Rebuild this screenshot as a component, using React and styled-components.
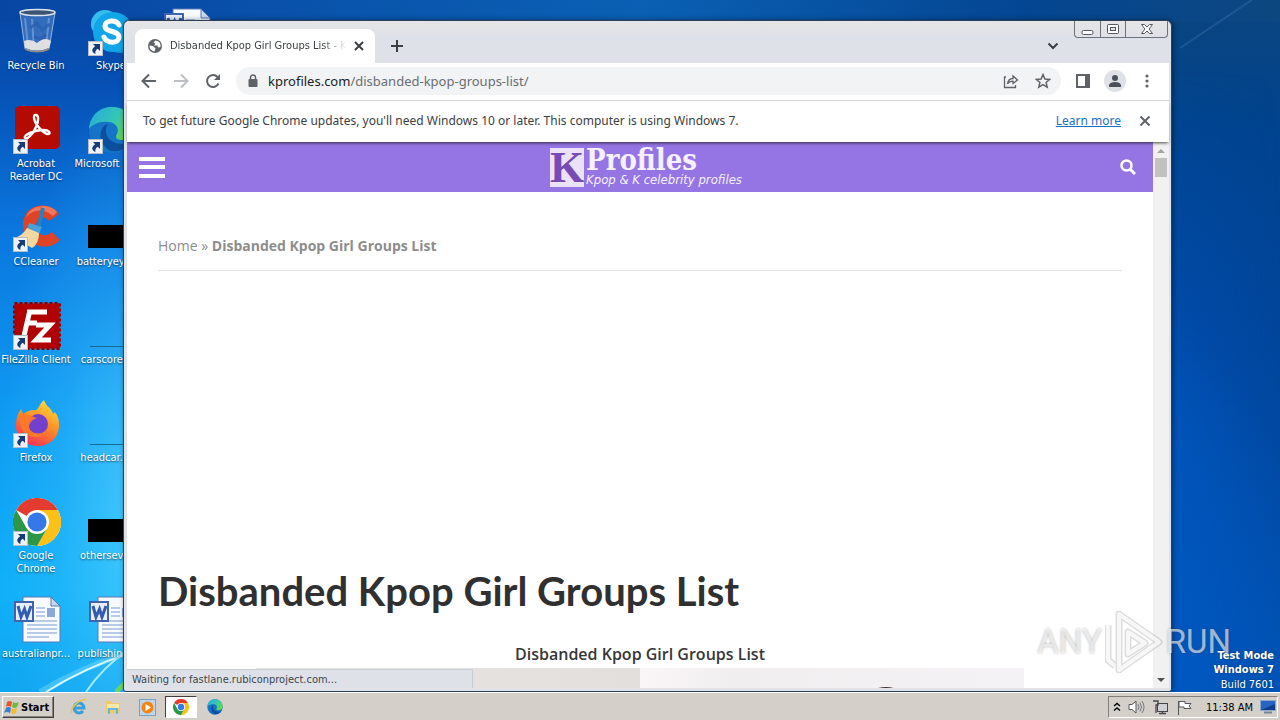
import React from "react";
import styled, { createGlobalStyle, css } from "styled-components";

const ui = `"Noto Sans", "Open Sans", sans-serif`;
const small = `"DejaVu Sans Condensed", "Noto Sans", sans-serif`;
const body = `"Open Sans", "Noto Sans", sans-serif`;

const GlobalStyle = createGlobalStyle`
  *, *::before, *::after { box-sizing: border-box; }
  html, body { margin: 0; padding: 0; }
  body { font-family: ${ui}; font-size: 11px; color: #000; overflow: hidden; }
  button { font: inherit; color: inherit; border: 0; padding: 0; margin: 0; background: none; cursor: pointer; }
  svg { display: block; flex: none; }
`;

const Screen = styled.div`
  height: 100vh;
  display: flex;
  flex-direction: column;
  overflow: hidden;
`;

const Desktop = styled.main`
  flex: 1;
  min-height: 0;
  position: relative;
  overflow: hidden;
  background:
    linear-gradient(90deg, #0846a3 0%, #0a60b4 50%, #044692 80%, #0d4780 100%) top / 100% 22px no-repeat,
    linear-gradient(180deg, #0846a3 0%, #0650b4 12%, #0a76de 33%, #0f9bf2 60%, #10b0f8 85%, #0fa5f0 100%) left / 130px 100% no-repeat,
    radial-gradient(ellipse 620px 520px at 700px 640px, #0062cc 0%, #005cc0 60%, rgba(0, 74, 160, 0) 100%),
    linear-gradient(180deg, #0b457f 0%, #00438f 20%, #00469c 50%, #0052b4 100%);
`;

const Glow = styled.div`
  position: absolute;
  left: 0;
  top: 0;
  width: 130px;
  height: 100%;
  background:
    radial-gradient(ellipse 130px 420px at 100% 74%, rgba(90, 214, 255, 0.65), rgba(60, 195, 255, 0.3) 55%, rgba(50, 180, 255, 0) 100%);
`;

const RightShade = styled.div`
  position: absolute;
  right: 0;
  top: 0;
  width: 130px;
  height: 100%;
  background: linear-gradient(90deg, rgba(0, 88, 200, 0.55), rgba(0, 70, 160, 0));
  mask-image: linear-gradient(180deg, transparent 10%, #000 60%);
`;

const Beams = styled.svg`
  position: absolute;
  left: 0;
  bottom: 0;
`;

const TopBeams = styled.svg`
  position: absolute;
  right: 0;
  top: 0;
`;

const IconGrid = styled.ul`
  position: relative;
  list-style: none;
  margin: 0;
  padding: 8px 0 0;
  display: grid;
  grid-auto-flow: column;
  grid-template-rows: repeat(7, 98px);
  grid-auto-columns: 75px;
  justify-content: start;
`;

const Shortcut = styled.button`
  width: 72px;
  display: flex;
  flex-direction: column;
  align-items: center;
  gap: 3px;
  color: #fff;
  font-family: ${small};
  line-height: 13px;
  text-align: center;
  text-shadow: 0 1px 2px rgba(0, 0, 0, 0.6);
`;

const ShortcutArt = styled.span`
  position: relative;
  width: 48px;
  height: 48px;
  margin-left: 2px;
`;

const Arrow = styled.svg`
  position: absolute;
  left: 0;
  bottom: 0;
`;

const ChromeWindow = styled.section`
  position: absolute;
  left: 123px;
  right: 108px;
  top: 20px;
  bottom: 0;
  display: flex;
  flex-direction: column;
  padding: 0 2px 3px 3px;
  background: #dfe3e8;
  border: 1px solid #2c3f58;
  border-radius: 6px 6px 3px 3px;
  box-shadow: 1px 0 5px rgba(0, 0, 0, 0.45);
  overflow: hidden;
`;

const TabStrip = styled.header`
  position: relative;
  height: 42px;
  flex: none;
  display: flex;
  align-items: flex-end;
  padding-left: 8px;
  background: linear-gradient(180deg, #e5e5e7 0%, #dee1e8 40%);
`;

const Tab = styled.div`
  width: 240px;
  height: 34px;
  display: flex;
  align-items: center;
  padding: 0 10px 0 13px;
  background: #fff;
  border-radius: 8px 8px 0 0;
  color: #3c4043;
`;

const TabTitle = styled.span`
  flex: 1;
  min-width: 0;
  margin: 0 6px 0 8px;
  overflow: hidden;
  white-space: nowrap;
  font-family: ${small};
  font-size: 11px;
  line-height: 16px;
  mask-image: linear-gradient(90deg, #000 86%, transparent 100%);
`;

const IconButton = styled.button`
  width: ${(p) => p.$w || 32}px;
  height: ${(p) => p.$h || 32}px;
  display: flex;
  align-items: center;
  justify-content: center;
  flex: none;
`;

const NewTab = styled(IconButton)`
  margin: 0 auto 1px 6px;
`;

const TabSearch = styled(IconButton)`
  margin: 0 100px 1px 0;
`;

const Caption = styled.div`
  position: absolute;
  right: 1px;
  top: 0;
  display: flex;
  height: 17px;
  border: 1px solid #6d7278;
  border-top: 0;
  border-radius: 0 0 4px 4px;
`;

const CaptionButton = styled(IconButton)`
  height: 16px;
  & + & { border-left: 1px solid #6d7278; }
`;

const Toolbar = styled.div`
  height: 38px;
  flex: none;
  display: flex;
  align-items: center;
  padding: 0 6px 1px;
  background: #fff;
  border-bottom: 1px solid #d5d7db;
`;

const Omnibox = styled.div`
  flex: 1;
  min-width: 0;
  height: 28px;
  margin: 0 6px 0 7px;
  padding: 0 2px 0 11px;
  display: flex;
  align-items: center;
  border-radius: 14px;
  background: #f1f3f4;
`;

const Address = styled.div`
  flex: 1;
  margin-left: 9px;
  font-size: 13px;
  line-height: 20px;
  color: #6a6e73;
  white-space: nowrap;
  b { font-weight: 400; color: #202124; }
`;

const Avatar = styled.span`
  width: 22px;
  height: 22px;
  border-radius: 50%;
  display: flex;
  align-items: center;
  justify-content: center;
  background: #dee1e6;
`;

const InfoBar = styled.div`
  position: relative;
  z-index: 1;
  height: 41px;
  flex: none;
  display: flex;
  align-items: center;
  padding: 0 8px 1px 16px;
  background: #fff;
  font-size: 12px;
  line-height: 16px;
  color: #3c4043;
  box-shadow: 0 2px 3px -1px rgba(0, 0, 0, 0.7);
`;

const LearnMore = styled.a`
  margin: 0 8px 0 auto;
  color: #1a6fc4;
  text-decoration: underline;
`;

const Viewport = styled.div`
  position: relative;
  flex: 1;
  min-height: 0;
  display: flex;
  background: #fff;
`;

const Page = styled.article`
  flex: 1;
  min-width: 0;
  overflow: hidden;
  font-family: ${body};
`;

const SiteHeader = styled.div`
  height: 50px;
  display: grid;
  grid-template-columns: 1fr auto 1fr;
  align-items: center;
  padding: 0 9px;
  background: #9575e4;
  > :last-child { justify-self: end; }
`;

const SiteLogo = styled.a`
  display: flex;
  align-items: center;
  gap: 2px;
  padding-left: 12px;
  color: #f6f0ff;
  text-decoration: none;
`;

const LogoK = styled.span`
  width: 34px;
  height: 39px;
  text-align: center;
  background: #ebe2fa;
  color: #774bb5;
  font: 700 44px/40px "Liberation Serif", serif;
`;

const LogoWords = styled.span`
  display: flex;
  flex-direction: column;
  strong { font: 700 29px/26px "DejaVu Serif Condensed", "DejaVu Serif", serif; }
  em { font: italic 400 13px/14px ${small}; }
`;

const Content = styled.div`
  padding: 0 31px;
`;

const Breadcrumb = styled.nav`
  padding: 43px 0 14px;
  border-bottom: 1px solid #e4e4e4;
  font-size: 14px;
  line-height: 21px;
  color: #8d8d8d;
  a { color: inherit; text-decoration: none; }
  strong { font-weight: 700; }
`;

const AdSlot = styled.div`
  height: 296px;
`;

const Title = styled.h1`
  margin: 0;
  font: 700 40px/48px Lato, sans-serif;
  color: #303030;
`;

const Lead = styled.p`
  margin: 28px 0 3px;
  text-align: center;
  font-size: 16px;
  line-height: 22px;
  font-weight: 600;
  color: #363636;
`;

const Photo = styled.div`
  display: grid;
  grid-template-columns: 1fr 1fr;
  width: 80%;
  max-width: 768px;
  height: 400px;
  margin: 0 auto;
  background: linear-gradient(90deg, #e0e4e0, #e4e1df 30%, #e2dfdc 50%, #faf6f7 50%, #f0eeef 62%, #f4f2f4);
`;

const Hat = styled.svg`
  grid-column: 2;
  margin: 18px 0 0 235px;
`;

const ScrollBar = styled.div`
  width: 16px;
  flex: none;
  display: flex;
  flex-direction: column;
  align-items: center;
  padding: 2px 0 0;
  background: #f1f1f1;
`;

const Thumb = styled.span`
  width: 12px;
  height: 19px;
  margin-bottom: auto;
  background: #c1c1c1;
`;

const StatusBubble = styled.div`
  position: absolute;
  left: 0;
  bottom: 0;
  width: 346px;
  height: 19px;
  padding: 0 5px;
  font-family: ${small};
  font-size: 11px;
  line-height: 19px;
  color: #40454b;
  background: #dee1e8;
  border: solid #c9cdd1;
  border-width: 1px 1px 0 0;
`;

const Watermark = styled.div`
  position: absolute;
  right: 49px;
  bottom: 19px;
  display: flex;
  align-items: center;
  gap: 3px;
  color: rgba(255, 255, 255, 0.6);
  font: 400 33px/62px Roboto, "Liberation Sans", sans-serif;
  text-shadow: 0 0 3px rgba(60, 60, 60, 0.4);
  pointer-events: none;
`;

const BuildInfo = styled.div`
  position: absolute;
  right: 6px;
  bottom: 0;
  text-align: right;
  color: #fff;
  font-family: ${small};
  font-size: 11px;
  line-height: 14px;
  text-shadow: 0 0 2px rgba(0, 0, 0, 0.5);
  p { margin: 0; }
  p:last-child { line-height: 15px; }
`;

const Taskbar = styled.footer`
  height: 28px;
  flex: none;
  display: flex;
  align-items: center;
  padding: 1px 2px 0;
  background: #d5cfc9;
  border-top: 1px solid #fff;
`;

const StartButton = styled.button`
  width: 52px;
  height: 22px;
  display: flex;
  align-items: center;
  gap: 1px;
  padding-left: 1px;
  margin-right: 9px;
  border: 1px solid;
  border-color: #fff #404040 #404040 #fff;
  box-shadow: inset -1px -1px 0 #87837e;
  font-family: ${small};
  font-weight: 700;
  font-size: 11px;
`;

const TaskButton = styled.button`
  width: 32px;
  height: 22px;
  margin-right: 2px;
  display: flex;
  align-items: center;
  justify-content: center;
  ${(p) => p.$active && css`
    background: #fff;
    border: 1px solid;
    border-color: #404040 #fff #fff #404040;
  `}
`;

const Tray = styled.div`
  height: 22px;
  margin-left: auto;
  padding: 0 1px 0 4px;
  display: flex;
  align-items: center;
  gap: 7px;
  border: 1px solid;
  border-color: #837f7a #fff #fff #837f7a;
  font-family: ${small};
  font-size: 11px;
  white-space: nowrap;
  time { margin-left: 6px; }
`;

function ChromeLogo({ size = 48 }) {
  return (
    <svg width={size} height={size} viewBox="0 0 48 48">
      <circle cx="24" cy="24" r="24" fill="#fff" />
      <path d="M24 24 L3.2 12 A24 24 0 0 1 44.8 12 L24 12Z" fill="#e33b2e" />
      <path d="M24 12 H44.8 A24 24 0 0 1 24 48 L34.4 30Z" fill="#fbc116" />
      <path d="M3.2 12 A24 24 0 0 0 24 48 L34.4 30 L24 34 L13.6 30Z" fill="#2d9748" />
      <circle cx="24" cy="24" r="12" fill="#fff" />
      <circle cx="24" cy="24" r="9.6" fill="#3778e8" />
    </svg>
  );
}

function EdgeLogo({ size = 48, id }) {
  return (
    <svg width={size} height={size} viewBox="0 0 48 48">
      <defs>
        <linearGradient id={id} x1="0" x2="1" y1="0" y2=".5">
          <stop offset="0" stopColor="#25a8e0" />
          <stop offset=".6" stopColor="#35c7b4" />
          <stop offset="1" stopColor="#63d64a" />
        </linearGradient>
      </defs>
      <circle cx="24" cy="24" r="23" fill="#1573c8" />
      <path d="M1 23 C2 9 12 1 24 1 C38 1 47 11 47 22 C47 30 41 34 34 34 C28 34 27 31 29 28 C32 22 27 16 20 16 C11 15 4 19 1 23Z" fill={`url(#${id})`} />
      <path d="M17 19 C10 25 11 38 21 44 C31 48 40 41 43 36 C37 39 27 39 21 33 C17 28 17 22 20 18Z" fill="#0c4f9c" />
    </svg>
  );
}

function WordDoc() {
  return (
    <svg width="48" height="48" viewBox="0 0 48 48">
      <path d="M10 1 H38 L47 10 V46 H10Z" fill="#f7faff" stroke="#5a78b4" />
      <path d="M38 1 V10 H47Z" fill="#c8d6ee" stroke="#5a78b4" />
      <path d="M23 12h9 M23 16h9 M23 20h9 M14 25h30 M14 29h30 M14 33h30 M14 37h30 M14 41h22" stroke="#7b9bcf" />
      <rect x="34" y="12" width="8" height="9" fill="#8ba8d8" />
      <rect x="2" y="6" width="18" height="19" fill="#e8effb" stroke="#4164ae" strokeWidth="2" />
      <path d="M5 10 L8 21 L11.500 13 L14 21 L18 10" fill="none" stroke="#335bb0" strokeWidth="3" />
    </svg>
  );
}

function RecycleBin() {
  return (
    <svg width="48" height="48" viewBox="0 0 48 48">
      <path d="M7 5 L12 41 Q24 46 36 41 L42 5Z" fill="#4c80c6" fillOpacity=".65" stroke="#c6d8ec" strokeOpacity=".7" />
      <path d="M12 10 L15 38 M19 11 L21 41 M36 10 L33 39" stroke="#9cc2ec" strokeOpacity=".45" strokeWidth="2" />
      <path d="M17 20 L24 15 L29 22 L37 16 M33 26 L29 31 L21 29" fill="none" stroke="#2a5fae" strokeOpacity=".8" strokeWidth="3" />
      <path d="M11 33 Q18 30 24 35 Q32 28 38 33 L36 40 Q24 45 12 40Z" fill="#efebe4" fillOpacity=".9" />
      <path d="M12 40 Q24 46 36 40 L36 42 Q24 47 12 42Z" fill="#8f8a86" />
      <ellipse cx="24.500" cy="4.500" rx="17.500" ry="3" fill="#3c5473" stroke="#dde4ec" strokeWidth="1.500" />
    </svg>
  );
}

function Skype() {
  return (
    <svg width="48" height="48" viewBox="0 0 48 48">
      <circle cx="17" cy="16" r="14" fill="#35bdf0" />
      <circle cx="32" cy="31" r="14" fill="#0d95dc" />
      <circle cx="25" cy="24" r="20" fill="#12a5e8" />
      <path d="M31 17 C28 11 17 12 17 18 C17 25 31 22 31 29 C31 36 19 36 16 29" fill="none" stroke="#fff" strokeWidth="5" strokeLinecap="round" />
    </svg>
  );
}

function Acrobat() {
  return (
    <svg width="48" height="48" viewBox="0 0 48 48">
      <rect x="2" y="0" width="45" height="43" rx="5" fill="#b30b00" />
      <path d="M22 9 C26 8 26 15 23 21 C20 28 14 34 12 32 C10 29 21 24 30 24 C37 24 38 28 35 28 C31 28 22 19 21 12 C21 10 21 9 22 9Z" fill="none" stroke="#fff" strokeWidth="2.400" />
    </svg>
  );
}

function CCleaner() {
  return (
    <svg width="48" height="48" viewBox="0 0 48 48">
      <path d="M46 10 C38 -3 13 -2 10 18 C9 41 34 50 47 36 L39 28 C31 35 22 30 23 21 C24 13 32 11 36 17Z" fill="#de4327" />
      <path d="M44 8 C36 -2 17 1 13 13 C22 4 32 5 40 12Z" fill="#f0755a" />
      <path d="M30 4 L25 25" stroke="#2d7fb8" strokeWidth="4" />
      <path d="M16 19 L29 23 L26 30 L14 25Z" fill="#4aa0d6" />
      <path d="M14 24 L26 29 Q26 40 19 44 L2 34 Q10 31 14 24Z" fill="#f4d8a0" />
    </svg>
  );
}

function FileZilla() {
  return (
    <svg width="48" height="48" viewBox="0 0 48 48">
      <rect x="1.500" y="1.500" width="45" height="45" fill="#b00000" stroke="#8c0000" strokeWidth="3" strokeDasharray="3 2" />
      <rect x="2" y="2" width="44" height="44" fill="#b00000" />
      <path d="M14 10 H34 M12 21 H24 M17 8 L10 38" stroke="#fff" strokeWidth="5" fill="none" />
      <path d="M23 23 H37 L23 38 H38" stroke="#fff" strokeWidth="5" fill="none" />
    </svg>
  );
}

function Firefox() {
  return (
    <svg width="48" height="48" viewBox="0 0 48 48">
      <defs>
        <linearGradient id="fox" x1=".8" x2=".3" y1="0" y2="1">
          <stop offset="0" stopColor="#ffe03c" />
          <stop offset=".5" stopColor="#ff8a24" />
          <stop offset="1" stopColor="#f5305c" />
        </linearGradient>
      </defs>
      <path d="M31 0 C33 7 39 8 40 14 L42 12 C45 16 46 20 46 25 C46 38 36 46 25 46 C11 46 2 36 3 24 C3 18 5 13 8 9 L10 14 C13 12 17 10 21 10 C25 12 26 4 31 0Z" fill="url(#fox)" />
      <circle cx="25" cy="24" r="10" fill="#7240cc" />
      <path d="M7 15 C14 12 18 17 24 18 C19 20 17 22 16 26 C16 33 25 36 34 31 C27 42 9 37 8 25Z" fill="#ff7a28" fillOpacity=".9" />
    </svg>
  );
}

function BlackBox() {
  return <svg width="48" height="48" viewBox="0 0 48 48"><path d="M0 21 H48 V44 H0Z" fill="#000" /></svg>;
}

function ThinLine() {
  return <svg width="48" height="48" viewBox="0 0 48 48"><path d="M2 44.500 H48" stroke="#146a94" /></svg>;
}

function LinkArrow() {
  return (
    <Arrow width="15" height="15" viewBox="0 0 15 15">
      <rect x=".5" y=".5" width="14" height="14" fill="#eef2f6" stroke="#b4bdc8" />
      <path d="M5 3 H12 V10 L9.800 7.800 C7.500 9 7 11 7.500 13 C3 11 3.500 7.500 7.200 5.200Z" fill="#163b78" />
    </Arrow>
  );
}

const shortcuts = [
  { label: "Recycle Bin", art: <RecycleBin /> },
  { label: "Acrobat Reader DC", art: <Acrobat />, link: true },
  { label: "CCleaner", art: <CCleaner />, link: true },
  { label: "FileZilla Client", art: <FileZilla />, link: true },
  { label: "Firefox", art: <Firefox />, link: true },
  { label: "Google Chrome", art: <ChromeLogo />, link: true },
  { label: "australianpr...", art: <WordDoc /> },
  { label: "Skype", art: <Skype />, link: true },
  { label: "Microsoft Edge", art: <EdgeLogo id="edgeDesk" />, link: true, nowrap: true },
  { label: "batteryeyes...", art: <BlackBox /> },
  { label: "carscore.jpg", art: <ThinLine /> },
  { label: "headcar.png", art: <ThinLine /> },
  { label: "othersever...", art: <BlackBox /> },
  { label: "publishingp...", art: <WordDoc /> },
  { label: "", art: <WordDoc /> },
];

const Label = styled.span`
  white-space: ${(p) => (p.$nowrap ? "nowrap" : "normal")};
`;

const stroke = { fill: "none", stroke: "#5f6368", strokeWidth: 2 };

export default function App() {
  return (
    <Screen>
      <GlobalStyle />
      <Desktop>
        <Glow />
        <RightShade />
        <Beams width="130" height="60" viewBox="0 0 130 60" aria-hidden="true">
          <path d="M40 60 Q80 36 130 20" fill="none" stroke="#7de4ff" strokeWidth="6" strokeOpacity=".4" />
          <path d="M46 60 Q84 36 130 21" fill="none" stroke="#d8f8ff" strokeWidth="2" />
          <path d="M86 60 Q102 36 130 16" fill="none" stroke="#a5ecff" strokeWidth="2" />
          <path d="M116 60 L130 46" stroke="#66d66c" strokeWidth="5" />
        </Beams>
        <TopBeams width="120" height="70" viewBox="0 0 120 70" aria-hidden="true">
          <path d="M20 48 L92 0" stroke="#4a80b8" strokeWidth="2" strokeOpacity=".3" />
        </TopBeams>
        <IconGrid>
          {shortcuts.map((s, i) => (
            <li key={i}>
              <Shortcut aria-label={s.label || "Document"}>
                <ShortcutArt>
                  {s.art}
                  {s.link && <LinkArrow />}
                </ShortcutArt>
                <Label $nowrap={s.nowrap}>{s.label}</Label>
              </Shortcut>
            </li>
          ))}
        </IconGrid>

        <ChromeWindow>
          <TabStrip>
            <Tab>
              <svg width="14" height="14" viewBox="0 0 14 14">
                <circle cx="7" cy="7" r="7" fill="#5f6368" />
                <path d="M7.500 1.500 L5.500 3.500 L7.500 4.500 L6 6.500 H9.500 L10 8.500 L12.500 8 A5.600 5.600 0 0 0 10 2.300Z M1.500 6.500 L5 7 L7.500 9.500 L6.500 12.500 A5.600 5.600 0 0 1 1.500 6.500Z" fill="#fff" />
              </svg>
              <TabTitle>Disbanded Kpop Girl Groups List - Kprofiles</TabTitle>
              <IconButton $w={12} $h={16} aria-label="Close tab">
                <svg width="10" height="10" viewBox="0 0 10 10"><path d="M1 1 L9 9 M9 1 L1 9" {...stroke} stroke="#3c4043" /></svg>
              </IconButton>
            </Tab>
            <NewTab aria-label="New tab">
              <svg width="12" height="12" viewBox="0 0 12 12"><path d="M6 0 V12 M0 6 H12" {...stroke} stroke="#3c4043" /></svg>
            </NewTab>
            <TabSearch aria-label="Search tabs">
              <svg width="12" height="8" viewBox="0 0 12 8"><path d="M1.500 1.500 L6 6 L10.500 1.500" {...stroke} stroke="#3c4043" /></svg>
            </TabSearch>
            <Caption>
              <CaptionButton $w={25} aria-label="Minimize">
                <svg width="13" height="12" viewBox="0 0 13 12"><rect x="1" y="7.500" width="11" height="4" rx="1.500" fill="#fff" stroke="#53575f" /></svg>
              </CaptionButton>
              <CaptionButton $w={25} aria-label="Restore">
                <svg width="12" height="10" viewBox="0 0 12 10"><rect x=".5" y=".5" width="11" height="9" rx="1" fill="#fff" stroke="#53575f" /><rect x="3.500" y="3.500" width="5" height="3" fill="#dee1e6" stroke="#53575f" /></svg>
              </CaptionButton>
              <CaptionButton $w={42} aria-label="Close">
                <svg width="12" height="10" viewBox="0 0 12 10"><path d="M.5 .5 H3.500 L6 3 L8.500 .5 H11.500 L8 5 L11.500 9.500 H8.500 L6 7 L3.500 9.500 H.5 L4 5Z" fill="#fff" stroke="#53575f" /></svg>
              </CaptionButton>
            </Caption>
          </TabStrip>

          <Toolbar>
            <IconButton aria-label="Back">
              <svg width="16" height="16" viewBox="0 0 16 16"><path d="M15 8 H2 M8 1.500 L1.500 8 L8 14.500" {...stroke} /></svg>
            </IconButton>
            <IconButton aria-label="Forward">
              <svg width="16" height="16" viewBox="0 0 16 16"><path d="M1 8 H14 M8 1.500 L14.500 8 L8 14.500" {...stroke} stroke="#bdbfc2" /></svg>
            </IconButton>
            <IconButton aria-label="Reload">
              <svg width="16" height="16" viewBox="0 0 16 16"><path d="M13.500 10.500 A6 6 0 1 1 12.500 4" {...stroke} /><path d="M15 1 V7 H9Z" fill="#5f6368" /></svg>
            </IconButton>
            <Omnibox>
              <svg width="12" height="14" viewBox="0 0 12 14"><rect x="1.500" y="5" width="9" height="8" rx="1" fill="#5f6368" /><path d="M3.500 5 V3.500 A2.500 2.500 0 0 1 8.500 3.500 V5" fill="none" stroke="#5f6368" strokeWidth="1.500" /></svg>
              <Address><b>kprofiles.com</b>/disbanded-kpop-groups-list/</Address>
              <IconButton aria-label="Share">
                <svg width="16" height="16" viewBox="0 0 16 16"><path d="M3 4 H1.500 V14.500 H12.500 V12 M4.500 11 C5 7 7 5.500 10 5.500 V3 L14.500 7 L10 10.500 V8.200 C7.500 8 6 8.800 4.500 11Z" fill="none" stroke="#5f6368" strokeWidth="1.300" /></svg>
              </IconButton>
              <IconButton aria-label="Bookmark">
                <svg width="16" height="16" viewBox="0 0 16 16"><path d="M8 1.500 L9.900 6 L14.700 6.400 L11.100 9.500 L12.200 14.200 L8 11.700 L3.800 14.200 L4.900 9.500 L1.300 6.400 L6.100 6Z" fill="none" stroke="#5f6368" strokeWidth="1.500" /></svg>
              </IconButton>
            </Omnibox>
            <IconButton aria-label="Side panel">
              <svg width="14" height="14" viewBox="0 0 14 14"><rect x="1" y="1" width="12" height="12" fill="none" stroke="#5f6368" strokeWidth="2" /><rect x="9" y="1" width="4" height="12" fill="#5f6368" /></svg>
            </IconButton>
            <IconButton aria-label="Profile">
              <Avatar>
                <svg width="12" height="12" viewBox="0 0 12 12"><circle cx="6" cy="3" r="3" fill="#4b515b" /><path d="M0 12 V10 Q1 7 6 7 T12 10 V12Z" fill="#4b515b" /></svg>
              </Avatar>
            </IconButton>
            <IconButton aria-label="Menu">
              <svg width="4" height="14" viewBox="0 0 4 14"><g fill="#5f6368"><circle cx="2" cy="2" r="1.600" /><circle cx="2" cy="7" r="1.600" /><circle cx="2" cy="12" r="1.600" /></g></svg>
            </IconButton>
          </Toolbar>

          <InfoBar>
            <span>To get future Google Chrome updates, you'll need Windows 10 or later. This computer is using Windows 7.</span>
            <LearnMore href="#learn-more">Learn more</LearnMore>
            <IconButton aria-label="Dismiss">
              <svg width="10" height="10" viewBox="0 0 10 10"><path d="M.5 .5 L9.500 9.500 M9.500 .5 L.5 9.500" {...stroke} /></svg>
            </IconButton>
          </InfoBar>

          <Viewport>
            <Page>
              <SiteHeader>
                <IconButton aria-label="Open menu">
                  <svg width="26" height="22" viewBox="0 0 26 22"><path d="M0 1h26v4H0z M0 9h26v4H0z M0 18h26v4H0z" fill="#fff" /></svg>
                </IconButton>
                <SiteLogo href="#home">
                  <LogoK>K</LogoK>
                  <LogoWords>
                    <strong>Profiles</strong>
                    <em>Kpop &amp; K celebrity profiles</em>
                  </LogoWords>
                </SiteLogo>
                <IconButton aria-label="Search">
                  <svg width="16" height="16" viewBox="0 0 16 16"><circle cx="6.500" cy="6.500" r="5" fill="none" stroke="#fff" strokeWidth="2.500" /><path d="M10 10 L15 15" stroke="#fff" strokeWidth="3" /></svg>
                </IconButton>
              </SiteHeader>
              <Content>
                <Breadcrumb aria-label="Breadcrumb">
                  <a href="#home">Home</a> » <strong>Disbanded Kpop Girl Groups List</strong>
                </Breadcrumb>
                <AdSlot />
                <Title>Disbanded Kpop Girl Groups List</Title>
                <Lead>Disbanded Kpop Girl Groups List</Lead>
                <Photo>
                  <Hat width="22" height="6" viewBox="0 0 22 6"><path d="M0 3 Q11 -1 22 3 V6 H0Z" fill="#3d3334" /></Hat>
                </Photo>
              </Content>
            </Page>
            <ScrollBar>
              <IconButton $w={16} $h={14} aria-label="Scroll up">
                <svg width="8" height="4" viewBox="0 0 8 4"><path d="M0 4 L4 0 L8 4Z" fill="#a3a3a3" /></svg>
              </IconButton>
              <Thumb />
              <IconButton $w={16} $h={17} aria-label="Scroll down">
                <svg width="8" height="4" viewBox="0 0 8 4"><path d="M0 0 L4 4 L8 0Z" fill="#505050" /></svg>
              </IconButton>
            </ScrollBar>
            <StatusBubble>Waiting for fastlane.rubiconproject.com...</StatusBubble>
          </Viewport>
        </ChromeWindow>

        <Watermark>
          <span>ANY</span>
          <svg width="58" height="62" viewBox="0 0 58 62">
            <g fill="none" strokeLinejoin="round">
              <path d="M3 14 V49 L10 55 M14 3 L54 31 L14 59Z M23 21 V43 L40 32Z" stroke="#777" strokeOpacity=".25" strokeWidth="7" />
              <path d="M3 14 V49 L10 55 M14 3 L54 31 L14 59Z M23 21 V43 L40 32Z" stroke="#fff" strokeOpacity=".75" strokeWidth="4" />
            </g>
          </svg>
          <span>RUN</span>
        </Watermark>
        <BuildInfo>
          <p><b>Test Mode</b></p>
          <p><b>Windows 7</b></p>
          <p>Build 7601</p>
        </BuildInfo>
      </Desktop>

      <Taskbar>
        <StartButton>
          <svg width="16" height="16" viewBox="0 0 16 16">
            <path d="M3 3 Q6 1 8 3 L7 8 Q4 6 2 8Z" fill="#e8552b" />
            <path d="M9 3 Q12 5 15 3 L13 8 Q11 10 8 8Z" fill="#74b843" />
            <path d="M2 9 Q4 7 7 9 L6 14 Q3 12 0 14Z" fill="#3b7ed2" />
            <path d="M8 9 Q10 11 13 9 L12 14 Q9 16 7 14Z" fill="#f5bd2c" />
          </svg>
          Start
        </StartButton>
        <TaskButton aria-label="Internet Explorer">
          <svg width="18" height="18" viewBox="0 0 18 18"><path d="M4 10 H14 A5 5 0 1 0 13 13" fill="none" stroke="#3aa0dc" strokeWidth="3" /><path d="M2 15 C-1 12 9 0 16 2" fill="none" stroke="#edc348" strokeWidth="1.500" /></svg>
        </TaskButton>
        <TaskButton aria-label="Explorer">
          <svg width="16" height="16" viewBox="0 0 16 16"><path d="M1 2 H6 L7 4 H15 V14 H1Z" fill="#edcb6c" /><path d="M2 5 H14 V9 H2Z" fill="#f9e8a8" /><path d="M3 15 V9 H13 V15 H11 V11 H5 V15Z" fill="#67b7de" /></svg>
        </TaskButton>
        <TaskButton aria-label="Media Player">
          <svg width="17" height="17" viewBox="0 0 17 17"><rect x=".5" y=".5" width="16" height="16" fill="#bcd6ee" stroke="#7ba0c4" /><circle cx="8.500" cy="8.500" r="6" fill="#f58412" /><path d="M6.500 5 L12 8.500 L6.500 12Z" fill="#fff" /></svg>
        </TaskButton>
        <TaskButton $active aria-label="Google Chrome"><ChromeLogo size={16} /></TaskButton>
        <TaskButton aria-label="Microsoft Edge"><EdgeLogo size={16} id="edgeTask" /></TaskButton>
        <Tray>
          <svg width="8" height="10" viewBox="0 0 8 10"><path d="M1 4 L4 1.500 L7 4 M1 8.500 L4 6 L7 8.500" fill="none" stroke="#000" strokeWidth="1.400" /></svg>
          <svg width="17" height="14" viewBox="0 0 17 14"><path d="M1 4.500 H4 L8 1 V13 L4 9.500 H1Z" fill="#fff" stroke="#55565a" /><path d="M10 4 Q12 7 10 10 M12 2.500 Q15 7 12 11.500 M14 1 Q18 7 14 13" fill="none" stroke="#77787c" /></svg>
          <svg width="17" height="15" viewBox="0 0 17 15"><rect x="5.500" y="3.500" width="10" height="8" fill="#cfd0d4" stroke="#44464c" /><path d="M1 1 H6 V5 H4 V13 M7 13.500 H14 M10.500 12 V14" fill="none" stroke="#44464c" strokeWidth="1.300" /></svg>
          <svg width="17" height="15" viewBox="0 0 17 15"><path d="M2.500 1 V15" stroke="#55565a" /><path d="M3 1.500 H9 V3.500 H15 L13 6 L15 8.500 H8 V7 H3Z" fill="#fff" stroke="#55565a" /></svg>
          <time>11:38 AM</time>
          <svg width="16" height="14" viewBox="0 0 16 14"><rect x=".5" y=".5" width="15" height="10" fill="#2864c4" stroke="#8ca8cc" /><path d="M1 10 L15 4 V10Z" fill="#113d8c" /><path d="M4 12.500 H12" stroke="#76839c" strokeWidth="2" /></svg>
        </Tray>
      </Taskbar>
    </Screen>
  );
}
